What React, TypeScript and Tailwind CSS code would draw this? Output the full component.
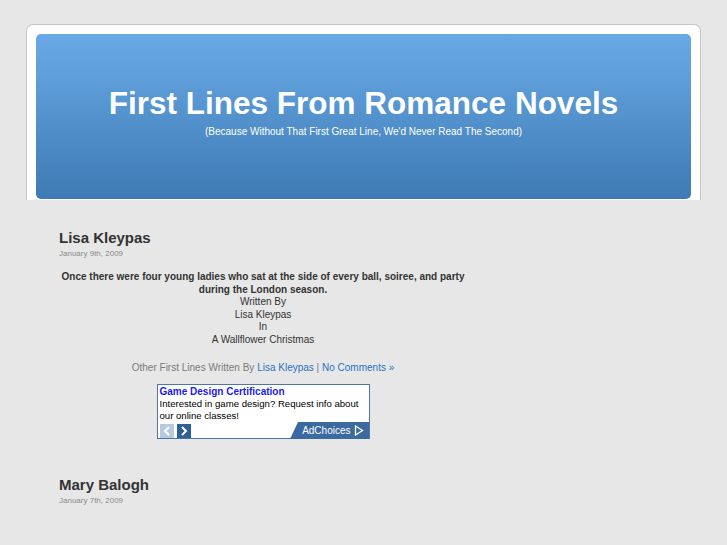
import React from 'react';

const Entry: React.FC<{ title: string; date: string; children?: React.ReactNode }> = ({ title, date, children }) => (
  <div className="mb-[37px]">
    <h2 className="text-[15px] leading-[18px] font-bold text-[#333]">{title}</h2>
    <div className="text-[8px] leading-[12px] text-[#8a8a8a] mt-[1px]">{date}</div>
    {children}
  </div>
);

const AdBox: React.FC = () => (
  <div className="mx-auto mt-[10px] w-[213px] h-[55px] border border-[#4a76a8] bg-white text-left flex flex-col">
    <div className="px-[2px] pt-[1px] text-[10px] leading-[12px] font-bold text-[#1a1aee]">Game Design Certification</div>
    <div className="px-[2px] text-[9.6px] leading-[12px] text-black">
      Interested in game design? Request info about our online classes!
    </div>
    <div className="mt-auto flex items-end justify-between">
      <div className="flex gap-[3px] pl-[2px] pb-[1px]">
        <div className="w-[14px] h-[14px] bg-[#b7c9de] flex items-center justify-center">
          <svg width="8" height="10" viewBox="0 0 8 10"><path d="M6 1 L2 5 L6 9" stroke="#fff" strokeWidth="2" fill="none" /></svg>
        </div>
        <div className="w-[14px] h-[14px] bg-[#2e5e93] flex items-center justify-center">
          <svg width="8" height="10" viewBox="0 0 8 10"><path d="M2 1 L6 5 L2 9" stroke="#fff" strokeWidth="2" fill="none" /></svg>
        </div>
      </div>
      <div className="relative h-[17px] w-[79px]">
        <svg className="absolute inset-0" width="79" height="17" viewBox="0 0 79 17"><path d="M8 0 H79 V17 H0 Z" fill="#3b6aa0" /></svg>
        <div className="relative flex items-center justify-end h-full pr-[5px] gap-[3px] text-white text-[10px] leading-[12px]">
          <span>AdChoices</span>
          <svg width="10" height="11" viewBox="0 0 10 11"><path d="M1.5 1 L8.5 5.5 L1.5 10 Z" stroke="#fff" strokeWidth="1.3" fill="none" /></svg>
        </div>
      </div>
    </div>
  </div>
);

export default function App() {
  return (
    <div className="min-h-[545px] bg-[#e7e7e7] font-['Liberation_Sans',Arial,sans-serif]">
      <div className="pt-6 px-[26px]">
        <div className="border border-b-0 border-[#c6c6c6] rounded-t-[7px] bg-white px-[9px] pt-[9px] pb-[1px]">
          <div className="h-[165px] rounded-[5px] bg-gradient-to-b from-[#69aae6] to-[#3e7bb5] text-center text-white pt-[51px]">
            <h1 className="text-[31.5px] leading-[36px] font-bold">First Lines From Romance Novels</h1>
            <p className="text-[10px] leading-[12px] mt-[5px]">(Because Without That First Great Line, We'd Never Read The Second)</p>
          </div>
        </div>
      </div>

      <div className="ml-[59px] w-[408px] pt-[29px]">
        <Entry title="Lisa Kleypas" date="January 9th, 2009">
          <div className="mt-[11px] text-center text-[10px] leading-[12.6px] text-[#333]">
            <p className="font-bold">
              Once there were four young ladies who sat at the side of every ball, soiree, and party during the London season.
            </p>
            <p>Written By</p>
            <p>Lisa Kleypas</p>
            <p>In</p>
            <p>A Wallflower Christmas</p>
            <p className="mt-[15px] text-[#7a7a7a]">
              Other First Lines Written By <a className="text-[#2a72c4]">Lisa Kleypas</a> | <a className="text-[#2a72c4]">No Comments »</a>
            </p>
            <AdBox />
          </div>
        </Entry>
        <Entry title="Mary Balogh" date="January 7th, 2009" />
      </div>
    </div>
  );
}
